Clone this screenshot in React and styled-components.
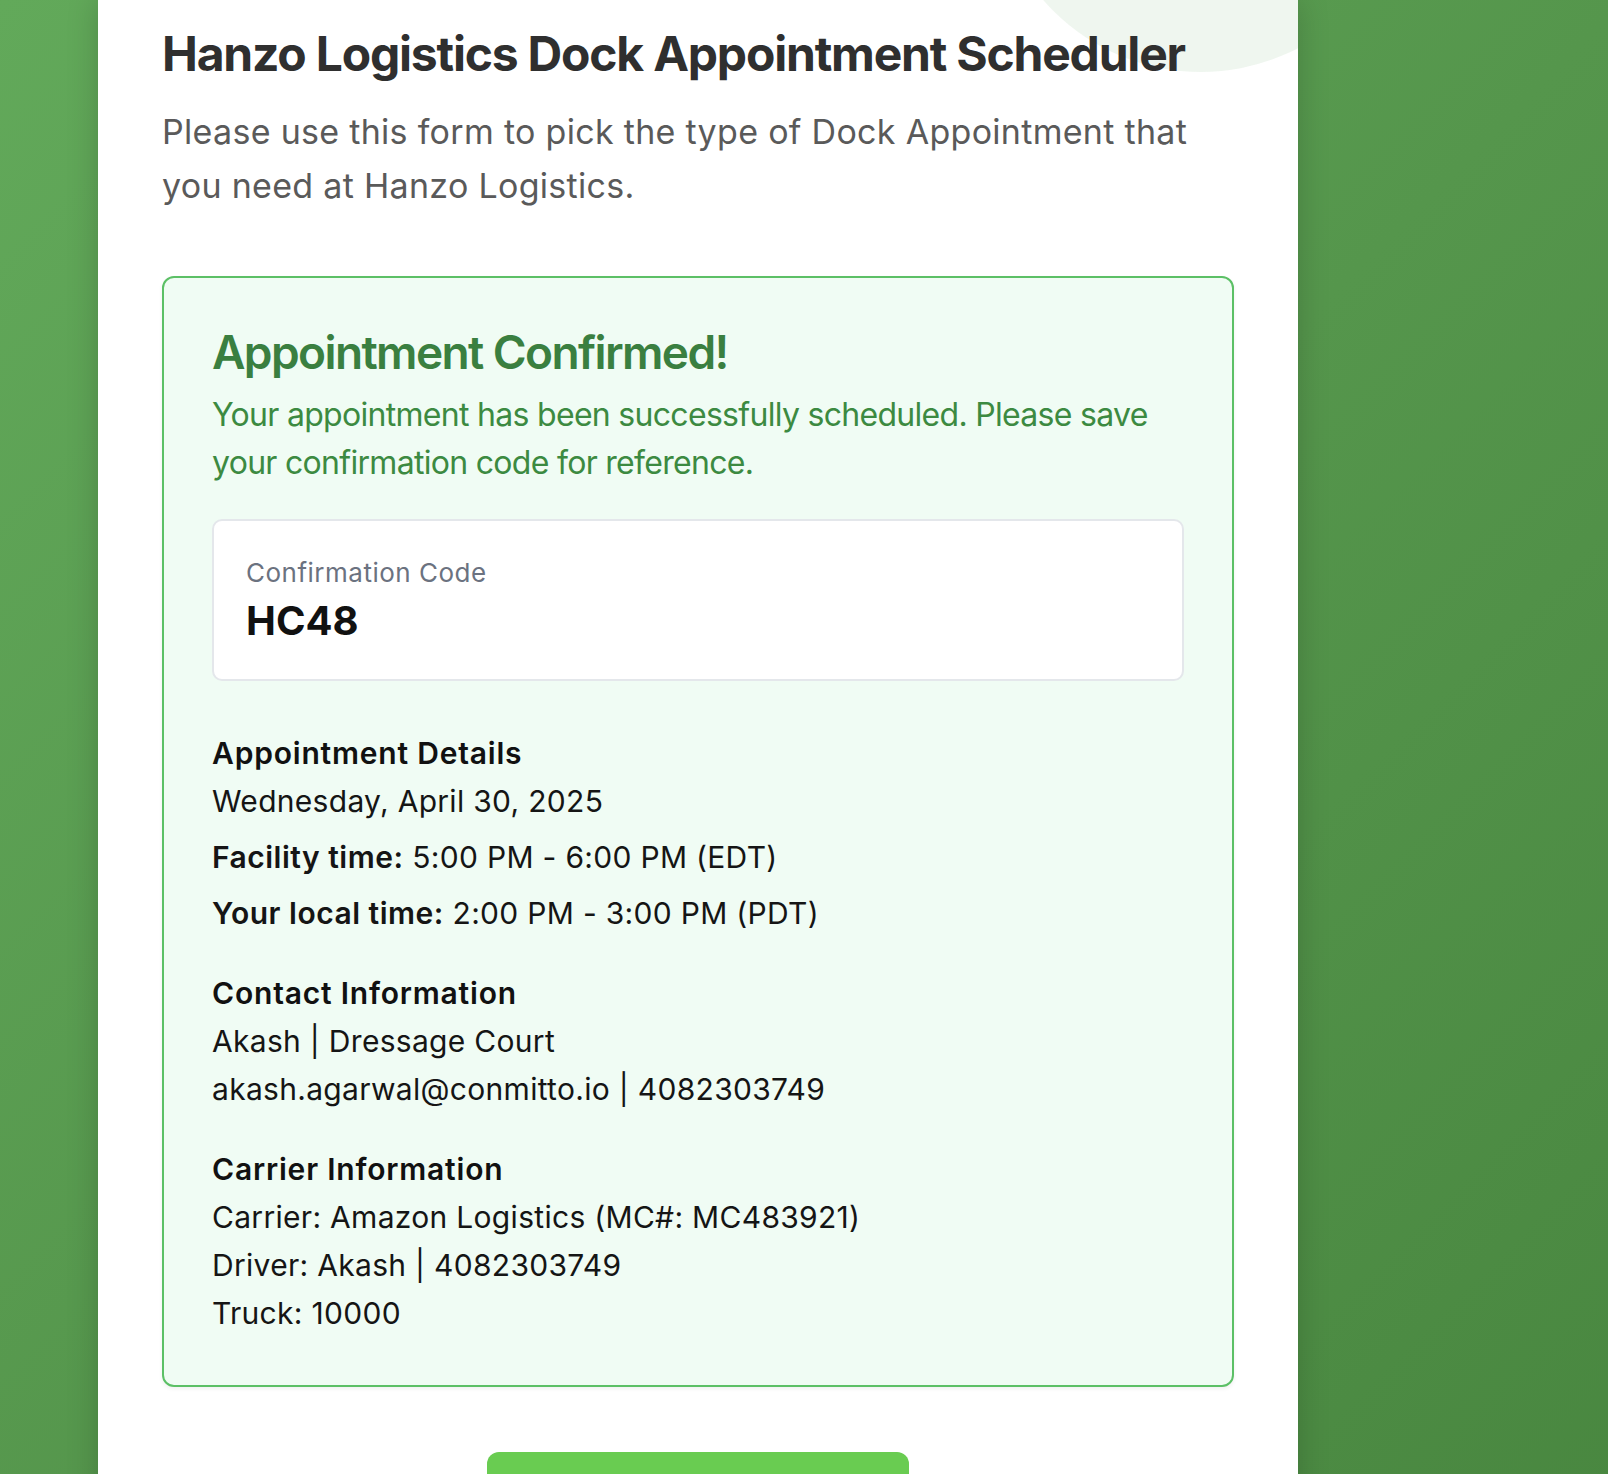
import React from 'react';
import styled, {createGlobalStyle} from 'styled-components';

const GlobalStyle = createGlobalStyle`
  html, body {
    margin: 0;
    padding: 0;
  }
  body {
    font-family: Inter, "Noto Sans", "Liberation Sans", sans-serif;
    background: linear-gradient(135deg, #62a95a 0%, #55964c 50%, #48863f 100%);
    min-height: 100vh;
    overflow: hidden;
  }
`;

const Page = styled.div`
  min-height: 100vh;
  padding-left: 98px;
`;

const Card = styled.div`
  position: relative;
  overflow: hidden;
  width: 1200px;
  box-sizing: border-box;
  background: #fff;
  padding: 25px 64px 120px;
  box-shadow: 0 0 30px rgba(0, 0, 0, 0.18);
`;

const Blob = styled.div`
  position: absolute;
  top: -346px;
  right: -112px;
  width: 418px;
  height: 418px;
  border-radius: 50%;
  background: rgba(76, 160, 80, 0.09);
`;

const Title = styled.h1`
  position: relative;
  margin: 0;
  font-size: 48px;
  line-height: 1.2;
  font-weight: 700;
  letter-spacing: -1.2px;
  color: #2f2f2f;
`;

const Subtitle = styled.p`
  position: relative;
  margin: 22px 0 0;
  font-size: 34px;
  line-height: 1.6;
  letter-spacing: 0.3px;
  color: #5a5a5a;
`;

const SuccessBox = styled.div`
  margin-top: 63px;
  border: 2px solid #5cc066;
  border-radius: 12px;
  background: #f0fcf4;
  padding: 48px;
  box-shadow: 0 2px 4px rgba(0, 0, 0, 0.06);
`;

const SuccessTitle = styled.h2`
  margin: 0;
  font-size: 46px;
  line-height: 53px;
  font-weight: 600;
  letter-spacing: -1.6px;
  color: #3a7f40;
`;

const SuccessText = styled.p`
  margin: 12px 0 0;
  font-size: 32px;
  line-height: 1.5;
  letter-spacing: -0.7px;
  color: #3c8a41;
`;

const CodeBox = styled.div`
  margin-top: 32px;
  background: #fff;
  border: 2px solid #e4e7eb;
  border-radius: 10px;
  padding: 32px;
`;

const CodeLabel = styled.div`
  font-size: 26px;
  line-height: 1.5;
  letter-spacing: 0.5px;
  color: #6b7280;
`;

const CodeValue = styled.div`
  margin-top: 3px;
  font-size: 40px;
  line-height: 1.3;
  font-weight: 700;
  color: #111;
`;

const Section = styled.div`
  margin-top: ${(props) => props.gap || 32}px;
`;

const SectionTitle = styled.h3`
  margin: 0;
  font-size: 30px;
  line-height: 1.6;
  font-weight: 600;
  letter-spacing: 0.8px;
  color: #111;
`;

const Line = styled.p`
  margin: ${(props) => (props.spaced ? '8px 0 0' : '0')};
  font-size: 30px;
  line-height: 1.6;
  letter-spacing: 0.3px;
  color: #151515;
`;

const Strong = styled.span`
  font-weight: 600;
  letter-spacing: 0.5px;
`;

const Actions = styled.div`
  display: flex;
  justify-content: center;
  margin-top: 65px;
`;

const Button = styled.button`
  width: 422px;
  height: 72px;
  border: none;
  border-radius: 12px;
  background: #69cc51;
  cursor: pointer;
`;

const details = {
  date: 'Wednesday, April 30, 2025',
  facility: '5:00 PM - 6:00 PM (EDT)',
  local: '2:00 PM - 3:00 PM (PDT)',
};

const App = () => {
  return (
    <Page>
      <GlobalStyle />
      <Card>
        <Blob />
        <Title>Hanzo Logistics Dock Appointment Scheduler</Title>
        <Subtitle>
          Please use this form to pick the type of Dock Appointment that you need at Hanzo Logistics.
        </Subtitle>

        <SuccessBox>
          <SuccessTitle>Appointment Confirmed!</SuccessTitle>
          <SuccessText>
            Your appointment has been successfully scheduled. Please save your confirmation code for reference.
          </SuccessText>

          <CodeBox>
            <CodeLabel>Confirmation Code</CodeLabel>
            <CodeValue>HC48</CodeValue>
          </CodeBox>

          <Section gap={48}>
            <SectionTitle>Appointment Details</SectionTitle>
            <Line>{details.date}</Line>
            <Line spaced>
              <Strong>Facility time:</Strong> {details.facility}
            </Line>
            <Line spaced>
              <Strong>Your local time:</Strong> {details.local}
            </Line>
          </Section>

          <Section>
            <SectionTitle>Contact Information</SectionTitle>
            <Line>Akash | Dressage Court</Line>
            <Line>akash.agarwal@conmitto.io | 4082303749</Line>
          </Section>

          <Section>
            <SectionTitle>Carrier Information</SectionTitle>
            <Line>Carrier: Amazon Logistics (MC#: MC483921)</Line>
            <Line>Driver: Akash | 4082303749</Line>
            <Line>Truck: 10000</Line>
          </Section>
        </SuccessBox>

        <Actions>
          <Button aria-label="Schedule another appointment" />
        </Actions>
      </Card>
    </Page>
  );
};

export default App;
